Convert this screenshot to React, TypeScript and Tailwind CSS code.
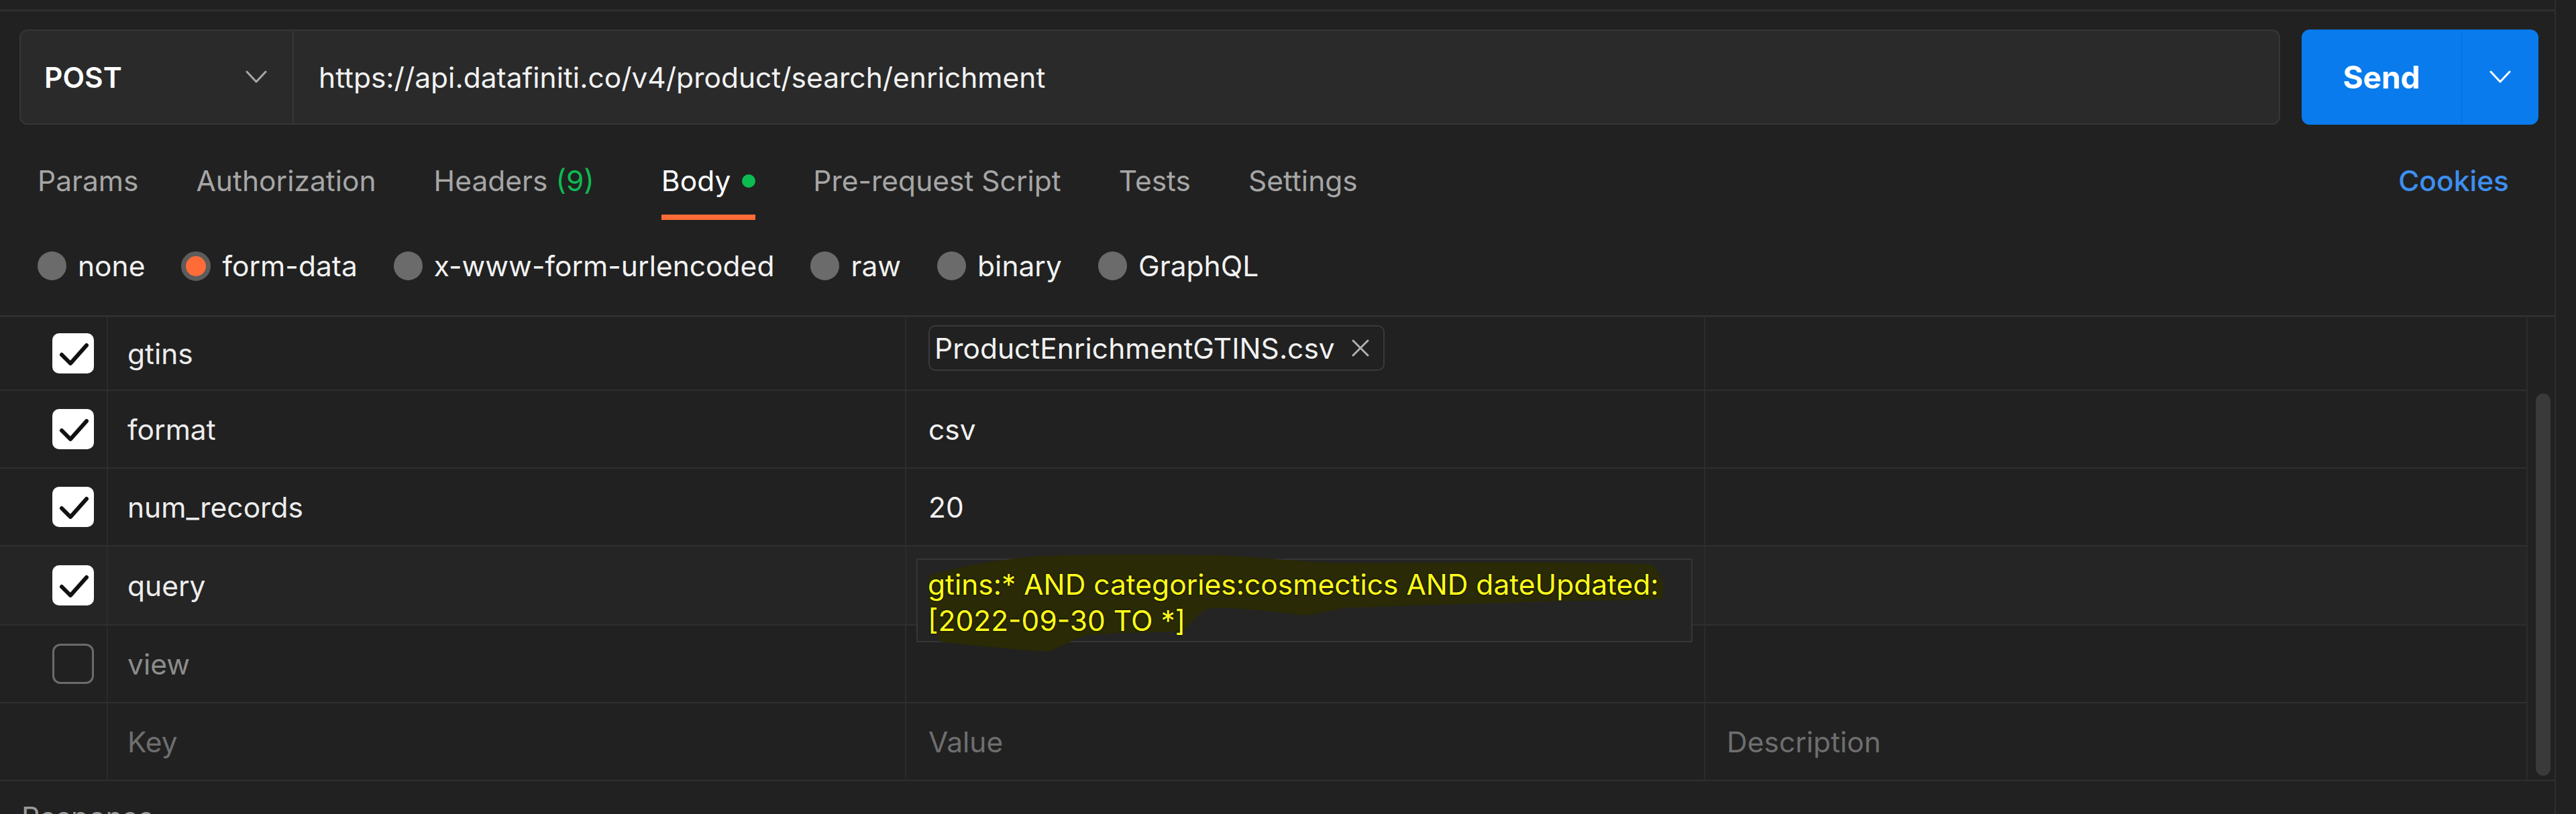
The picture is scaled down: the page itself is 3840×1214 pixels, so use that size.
import React from "react";

function Chevron({ color, className }: { color: string; className?: string }) {
  return (
    <svg className={className} width="32" height="20" viewBox="0 0 32 20" fill="none">
      <polyline points="2,2 16,17 30,2" stroke={color} strokeWidth="3" strokeLinecap="round" strokeLinejoin="round" />
    </svg>
  );
}

function Check({ on }: { on: boolean }) {
  if (!on) {
    return <div className="w-[62px] h-[60px] rounded-[12px] border-[3px] border-[#6b6b6b]" />;
  }
  return (
    <div className="w-[62px] h-[60px] rounded-[10px] bg-white flex items-center justify-center">
      <svg width="62" height="60" viewBox="0 0 62 60" fill="none">
        <polyline points="14,32 27,45 51,18" stroke="#111" strokeWidth="6" strokeLinecap="round" strokeLinejoin="round" />
      </svg>
    </div>
  );
}

function Radio({ label, selected }: { label: string; selected?: boolean }) {
  return (
    <div className="flex items-center gap-[17px]">
      {selected ? (
        <div className="w-[44px] h-[44px] rounded-full border-[7px] border-[#5c5c5c] bg-[#ff6c37]" />
      ) : (
        <div className="w-[43px] h-[43px] rounded-full bg-[#6b6b6b]" />
      )}
      <span className="text-[#f2f2f2]">{label}</span>
    </div>
  );
}

function Tab({ children, active }: { children: React.ReactNode; active?: boolean }) {
  return (
    <div className="flex flex-col">
      <div className={"h-[53px] flex items-center " + (active ? "text-white" : "text-[#a6a6a6]")}>{children}</div>
      <div className={"mt-[24px] h-[8px] " + (active ? "bg-[#ff6c37]" : "bg-transparent")} />
    </div>
  );
}

type RowProps = {
  h: string;
  on: boolean | null;
  keyText: React.ReactNode;
  value?: React.ReactNode;
  desc?: React.ReactNode;
  hover?: boolean;
  last?: boolean;
  valueTop?: boolean;
};

function Row({ h, on, keyText, value, desc, hover, last, valueTop }: RowProps) {
  return (
    <div className={"flex " + h + " " + (last ? "" : "border-b-2 border-[#2f2f2f] ") + (hover ? "bg-[#252525]" : "")}>
      <div className="w-[161px] shrink-0 border-r-2 border-[#2b2b2b] flex items-center pl-[78px]">
        {on !== null && <Check on={on} />}
      </div>
      <div className="w-[1190px] shrink-0 border-r-2 border-[#2b2b2b] flex items-center pl-[29px]">{keyText}</div>
      <div className={"w-[1191px] shrink-0 border-r-2 border-[#2b2b2b] relative flex pl-[33px] " + (valueTop ? "items-start pl-[15px] pt-[12px]" : "items-center")}>
        {value}
      </div>
      <div className="flex-1 flex items-center pl-[32px]">{desc}</div>
    </div>
  );
}

export default function App() {
  return (
    <div className="w-[3840px] h-[1214px] bg-[#212121] overflow-hidden flex [font-family:Inter,sans-serif] text-[42.5px] leading-[53px] text-[#ededed]">
      <div className="w-[3808px] shrink-0 flex flex-col">
        <div className="h-[14px] shrink-0" />
        <div className="h-[3px] bg-[#2f2f2f] shrink-0" />

        {/* URL row */}
        <div className="mt-[27px] flex pl-[29px] h-[142px] shrink-0">
          <div className="w-[3370px] h-[142px] rounded-[12px] border-2 border-[#363636] bg-[#2a2a2a] flex">
            <div className="w-[407px] shrink-0 border-r-2 border-[#363636] flex items-center justify-between pl-[35px] pr-[38px]">
              <span className="font-semibold text-white">POST</span>
              <Chevron color="#a8a8a8" />
            </div>
            <div className="flex items-center pl-[37px] text-[#f2f2f2]">https://api.datafiniti.co/v4/product/search/enrichment</div>
          </div>
          <div className="ml-[32px] w-[353px] h-[142px] rounded-[12px] bg-[#097bed] flex">
            <div className="w-[238px] flex items-center justify-center font-bold text-[46px] text-white">Send</div>
            <div className="w-[1px] bg-[#0a6cd0]" />
            <div className="flex-1 flex items-center justify-center">
              <Chevron color="#ffffff" />
            </div>
          </div>
        </div>

        {/* Tabs */}
        <div className="mt-[57px] flex items-start pl-[56px] pr-[68px] gap-[86px] shrink-0">
          <Tab>Params</Tab>
          <Tab>Authorization</Tab>
          <Tab>
            Headers<span className="ml-[12px] text-[#0cbb52]">(9)</span>
          </Tab>
          <div className="ml-[14px]">
            <Tab active>
              Body<span className="ml-[17px] w-[20px] h-[20px] rounded-full bg-[#0cbb52] inline-block" />
            </Tab>
          </div>
          <Tab>Pre-request Script</Tab>
          <Tab>Tests</Tab>
          <Tab>Settings</Tab>
          <div className="ml-auto h-[53px] flex items-center font-medium text-[#3d8ff0]">Cookies</div>
        </div>

        {/* Body type radios */}
        <div className="mt-[42px] h-[53px] flex items-center pl-[56px] gap-[54px] shrink-0">
          <Radio label="none" />
          <Radio label="form-data" selected />
          <Radio label="x-www-form-urlencoded" />
          <Radio label="raw" />
          <Radio label="binary" />
          <Radio label="GraphQL" />
        </div>

        {/* Table */}
        <div className="mt-[47px] border-t-[3px] border-b-2 border-[#2f2f2f] flex shrink-0">
          <div className="w-[3768px] shrink-0 border-r-2 border-[#2b2b2b] flex flex-col">
            <Row
              h="h-[110px]"
              on={true}
              keyText="gtins"
              valueTop
              value={
                <div className="h-[68px] rounded-[10px] border-2 border-[#3a3a3a] flex items-center pl-[7px] pr-[20px] gap-[24px]">
                  <span className="text-[#f2f2f2]">ProductEnrichmentGTINS.csv</span>
                  <svg width="28" height="28" viewBox="0 0 28 28" fill="none">
                    <path d="M3 3 L25 25 M25 3 L3 25" stroke="#b0b0b0" strokeWidth="3" strokeLinecap="round" />
                  </svg>
                </div>
              }
            />
            <Row h="h-[116px]" on={true} keyText="format" value={<span className="text-[#f2f2f2]">csv</span>} />
            <Row h="h-[116px]" on={true} keyText="num_records" value={<span className="text-[#f2f2f2]">20</span>} />
            <div className="relative z-10">
              <Row
                h="h-[118px]"
                on={true}
                hover
                keyText="query"
                value={
                  <div className="absolute left-[15px] top-[18px] w-[1157px] h-[125px] border-2 border-[#363636] bg-[#242424]">
                    <svg className="absolute left-0 top-0 overflow-visible" width="1157" height="125" viewBox="0 0 1157 125" fill="none">
                      <path
                        d="M17 24 C60 10 120 0 174 -5 C260 -9 360 -8 434 -7 C520 -4 580 4 634 5 C800 4 960 2 1094 7 C1112 20 1114 45 1109 58 C1040 62 980 60 934 62 C820 66 720 68 634 72 C600 78 585 84 569 82 C520 76 470 70 434 72 C410 84 405 100 394 107 C340 108 300 108 254 112 C230 118 215 130 194 137 C140 133 80 128 34 122 C20 100 14 60 17 24 Z"
                        fill="#2a2a06"
                      />
                    </svg>
                    <div className="relative pl-[15px] pt-[10px] leading-[54px] whitespace-nowrap text-[#ffff1a] [text-shadow:0_0_3px_#000]">
                      gtins:* AND categories:cosmectics AND dateUpdated:
                      <br />
                      [2022-09-30 TO *]
                    </div>
                  </div>
                }
              />
            </div>
            <Row h="h-[116px]" on={false} keyText={<span className="text-[#8c8c8c]">view</span>} />
            <Row
              h="h-[114px]"
              on={null}
              last
              keyText={<span className="text-[#6e6e6e]">Key</span>}
              value={<span className="text-[#6e6e6e]">Value</span>}
              desc={<span className="text-[#6e6e6e]">Description</span>}
            />
          </div>
          <div className="flex-1 flex flex-col pt-[114px] pl-[12px]">
            <div className="w-[22px] h-[570px] rounded-full bg-[#3a3a3a]" />
          </div>
        </div>

        <div className="mt-[27px] pl-[32px] text-[#9a9a9a] shrink-0">Response</div>
      </div>
      <div className="w-[2px] shrink-0 bg-[#2e2e2e]" />
      <div className="flex-1" />
    </div>
  );
}
